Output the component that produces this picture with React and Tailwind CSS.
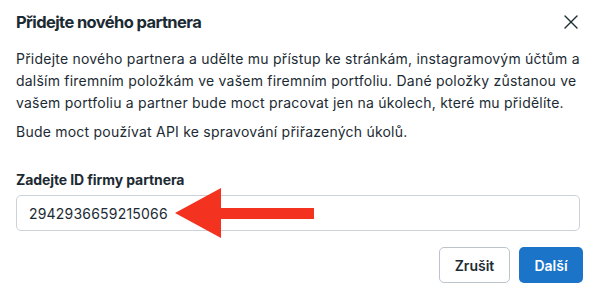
const Arrow = () => (
  <svg
    className="absolute left-[158px] top-[-8px]"
    width="142"
    height="52"
    viewBox="0 0 142 52"
  >
    <polygon
      points="0,25 46,0 46,20 139,20 139,31 46,31 46,50"
      fill="#f3321f"
    />
  </svg>
);

const CloseIcon = () => (
  <svg width="14" height="14" viewBox="0 0 14 14">
    <path
      d="M1 1 L13 13 M13 1 L1 13"
      stroke="#1c2b33"
      strokeWidth="1.4"
      strokeLinecap="round"
    />
  </svg>
);

export default function App() {
  return (
    <div
      className="w-[596px] h-[296px] bg-white text-[#1c2b33] relative"
      style={{ fontFamily: "Inter, 'Noto Sans', sans-serif" }}
    >
      <div className="flex items-center justify-between pl-4 pr-[18px] pt-[2px] h-[42px]">
        <h1 className="text-[16.5px] font-bold leading-5 tracking-[-0.6px]">
          Přidejte nového partnera
        </h1>
        <button>
          <CloseIcon />
        </button>
      </div>
      <div className="px-4 pt-[6px] text-[14px] leading-[22px] tracking-[0.22px]">
        <p>
          Přidejte nového partnera a udělte mu přístup ke stránkám,
          instagramovým účtům a dalším firemním položkám ve vašem firemním
          portfoliu. Dané položky zůstanou ve vašem portfoliu a partner bude
          moct pracovat jen na úkolech, které mu přidělíte.
        </p>
        <p className="mt-[7px]">
          Bude moct používat API ke spravování přiřazených úkolů.
        </p>
      </div>
      <div className="px-4 pt-[27px]">
        <label className="block text-[14px] font-bold leading-5 tracking-[-0.1px]">
          Zadejte ID firmy partnera
        </label>
        <div className="relative mt-[5px] h-[36px] rounded-[5px] border border-[#cbd2d9] flex items-center px-3 text-[14px] tracking-[0.2px]">
          <span>2942936659215066</span>
          <Arrow />
        </div>
      </div>
      <div className="flex justify-end gap-[9px] px-[13px] pt-[16px]">
        <button className="h-[36px] w-[71px] rounded-[5px] border border-[#bcc4cc] text-[14px] font-semibold text-[#1c2b33]">
          Zrušit
        </button>
        <button className="h-[36px] w-[64px] rounded-[5px] bg-[#1b74c8] text-[14px] font-semibold text-white">
          Další
        </button>
      </div>
    </div>
  );
}
